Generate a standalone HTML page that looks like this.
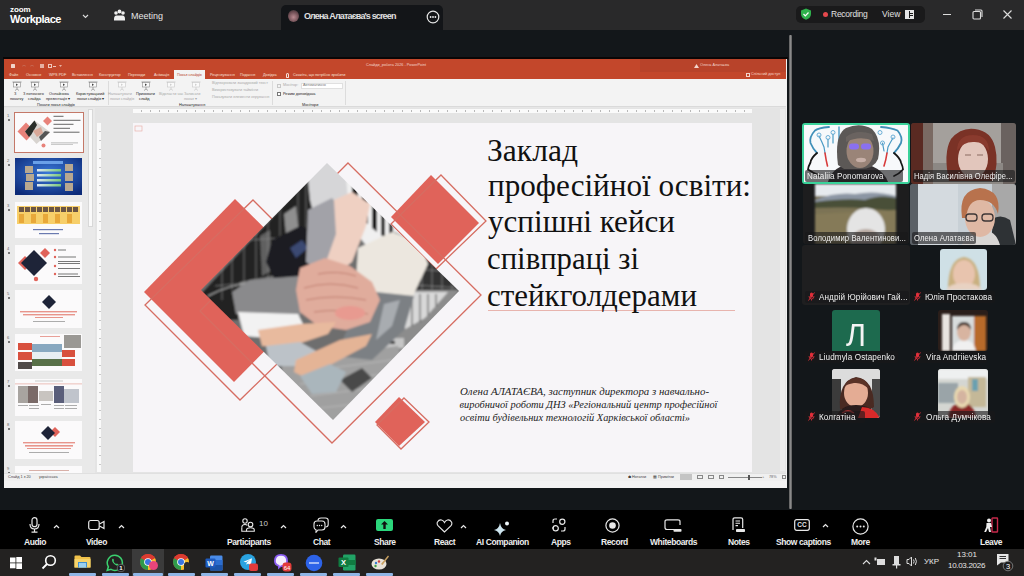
<!DOCTYPE html>
<html><head><meta charset="utf-8">
<style>
*{margin:0;padding:0;box-sizing:border-box}
html,body{width:1024px;height:576px;overflow:hidden;background:#131518;font-family:"Liberation Sans",sans-serif}
.a{position:absolute}
#top{left:0;top:0;width:1024px;height:30px;background:#29292a}
#main{left:0;top:30px;width:1024px;height:480px;background:#13171a}
#tb{left:0;top:510px;width:1024px;height:39px;background:#000}
#task{left:0;top:549px;width:1024px;height:27px;background:#232221}
#ppt{left:4px;top:59px;width:783px;height:429px;background:#e6e6e6;overflow:hidden}
#sep{left:789px;top:35px;width:3px;height:474px;background:linear-gradient(90deg,#5a5a5a,#8a8a8a,#5a5a5a);border-radius:1px}
.t{color:#fff;white-space:nowrap}
.rt{font-size:3.8px;color:#222;line-height:5px}
.rt.g{color:#aaa}
.bl{font-size:8.5px;color:#eee;font-weight:bold;letter-spacing:-0.4px}
.lab{height:12px;background:rgba(24,24,26,0.62);border-radius:2px}
.pn{font-size:8.5px;color:#f0f0f0;letter-spacing:0.1px;transform-origin:left center}
.rib svg{display:block;position:absolute;left:0;top:0}
.rib .ic{position:absolute;left:0;top:0;width:8px;height:9px;border:1px solid #7b7b7b;border-radius:1px;background:#fff}
.rib.g .ic{border-color:#c3c3c3}
</style></head><body>
<div id="top" class="a">
  <div class="a t" style="left:10px;top:5px;font-size:8px;font-weight:bold;letter-spacing:-0.1px">zoom</div>
  <div class="a t" style="left:10px;top:13px;font-size:11px;font-weight:bold;letter-spacing:-0.5px">Workplace</div>
  <svg class="a" style="left:82px;top:13px" width="7" height="6" viewBox="0 0 7 6"><path d="M1 2 L3.5 4.5 L6 2" stroke="#ddd" stroke-width="1.1" fill="none"/></svg>
  <svg class="a" style="left:113px;top:9px" width="13" height="13" viewBox="0 0 13 13"><circle cx="3" cy="4" r="1.8" fill="#eee"/><circle cx="6.5" cy="2.5" r="1.9" fill="#eee"/><circle cx="10" cy="4" r="1.8" fill="#eee"/><path d="M1 10 Q1 6.5 3.5 6.5 L9.5 6.5 Q12 6.5 12 10 L12 11.5 L1 11.5Z" fill="#eee"/></svg>
  <div class="a t" style="left:131px;top:11px;font-size:9px;color:#e6e6e6">Meeting</div>
  <div class="a" style="left:281px;top:5px;width:162px;height:25px;background:#131518;border-radius:5px 5px 0 0"></div>
  <div class="a" style="left:288px;top:10px;width:11px;height:12px;border-radius:50%;background:radial-gradient(circle at 50% 60%,#b98a90,#6a4a50 60%,#2a2a2a)"></div>
  <div class="a t" style="left:304px;top:11px;font-size:9px;color:#e0e0e0;font-weight:bold;letter-spacing:-0.85px">Олена Алатаєва's screen</div>
  <svg class="a" style="left:426px;top:10px" width="14" height="14" viewBox="0 0 14 14"><circle cx="7" cy="7" r="5.8" stroke="#e6e6e6" stroke-width="1.2" fill="none"/><circle cx="4.6" cy="7" r="0.9" fill="#eee"/><circle cx="7" cy="7" r="0.9" fill="#eee"/><circle cx="9.4" cy="7" r="0.9" fill="#eee"/></svg>
  <div class="a" style="left:796px;top:6px;width:129px;height:17px;background:#1a1a1b;border-radius:5px"></div>
  <svg class="a" style="left:800px;top:8px" width="12" height="12" viewBox="0 0 12 12"><path d="M6 0.5 L11 2.5 L11 6 Q11 10 6 11.8 Q1 10 1 6 L1 2.5Z" fill="#2fb24c"/><path d="M3.5 6 L5.3 7.8 L8.5 4.5" stroke="#fff" stroke-width="1.2" fill="none"/></svg>
  <div class="a" style="left:823px;top:12px;width:5px;height:5px;border-radius:50%;background:#e5484d"></div>
  <div class="a t" style="left:831px;top:9px;font-size:8.5px;color:#e0e0e0;letter-spacing:-0.25px">Recording</div>
  <div class="a t" style="left:882px;top:9px;font-size:8.5px;color:#e0e0e0">View</div>
  <svg class="a" style="left:905px;top:10px" width="9" height="9" viewBox="0 0 9 9"><rect x="0" y="0" width="9" height="9" fill="#e6e6e6"/><rect x="4" y="1" width="1" height="7" fill="#1a1a1b"/><rect x="5" y="3" width="3" height="1" fill="#1a1a1b"/><rect x="5" y="5" width="3" height="1" fill="#1a1a1b"/></svg>
  <div class="a" style="left:943px;top:14px;width:8px;height:1px;background:#ddd"></div>
  <svg class="a" style="left:972px;top:9px" width="11" height="11" viewBox="0 0 11 11"><rect x="1" y="2.5" width="7.5" height="7.5" rx="1" stroke="#ddd" stroke-width="1.1" fill="none"/><path d="M3 1 L9 1 Q10 1 10 2 L10 8" stroke="#ddd" stroke-width="1.1" fill="none"/></svg>
  <svg class="a" style="left:1003px;top:10px" width="9" height="9" viewBox="0 0 9 9"><path d="M0.5 0.5 L8.5 8.5 M8.5 0.5 L0.5 8.5" stroke="#ddd" stroke-width="1.1"/></svg>
</div>
<div id="main" class="a"></div>
<div class="a" style="left:3px;top:57px;width:785px;height:2px;background:#0a0606"></div>
<div id="ppt" class="a">
  <!-- title bar + tabs (abs coords via offset: left-4, top-59) -->
  <div class="a" style="left:0;top:0;width:783px;height:20px;background:#c3472b"></div>
  <div class="a" style="left:636px;top:0;width:147px;height:13px;background:#b8432a"></div>
  
  <div class="a" style="left:7px;top:5px;width:4px;height:4px;background:#f2d4ca;border-radius:0.5px"></div>
  <div class="a" style="left:18px;top:6px;width:4px;height:2px;border-top:1px solid #c86a55;border-radius:2px 2px 0 0"></div>
  <div class="a" style="left:26px;top:6px;width:4px;height:2px;border-top:1px solid #c86a55;border-radius:2px 2px 0 0"></div>
  <div class="a" style="left:36px;top:4.5px;width:4px;height:4.5px;background:#e6b0a2"></div>
  <div class="a" style="left:44px;top:5px;width:4px;height:4px;border:0.8px solid #f0c8bd"></div>
  <div class="a" style="left:49px;top:6.5px;width:3px;height:1.5px;background:#f0c8bd"></div>
  <div class="a" style="left:55px;top:6px;width:3px;height:2px;background:#e8b0a0;clip-path:polygon(0 0,100% 0,50% 100%)"></div>
  <div class="a t" style="left:362px;top:4px;font-size:3.8px;color:#f3d5cc">Слайди_робота 2026  -  PowerPoint</div>
  <div class="a" style="left:690px;top:5px;width:5px;height:4px;background:#f3d5cc;clip-path:polygon(50% 0,100% 100%,0 100%)"></div>
  <div class="a t" style="left:696px;top:4px;font-size:3.8px;color:#f3d5cc">Олена Алатаєва</div>
  <div class="a" style="left:742px;top:14px;width:4px;height:4px;border:1px solid #f3d5cc"></div>
  <div class="a t" style="left:747px;top:13px;font-size:3.8px;color:#f3d5cc">Спільний доступ</div>
  <div class="a t tabs" style="left:5px;top:14px;font-size:3.8px;color:#f6e0d9">Файл</div>
  <div class="a t" style="left:22px;top:14px;font-size:3.8px;color:#f6e0d9">Основне</div>
  <div class="a t" style="left:45px;top:14px;font-size:3.8px;color:#f6e0d9">WPS PDF</div>
  <div class="a t" style="left:68px;top:14px;font-size:3.8px;color:#f6e0d9">Вставлення</div>
  <div class="a t" style="left:95px;top:14px;font-size:3.8px;color:#f6e0d9">Конструктор</div>
  <div class="a t" style="left:124px;top:14px;font-size:3.8px;color:#f6e0d9">Переходи</div>
  <div class="a t" style="left:150px;top:14px;font-size:3.8px;color:#f6e0d9">Анімація</div>
  <div class="a" style="left:170px;top:11px;width:31px;height:9px;background:#f3f3f3"></div>
  <div class="a t" style="left:173px;top:14px;font-size:3.8px;color:#b8432a">Показ слайдів</div>
  <div class="a t" style="left:206px;top:14px;font-size:3.8px;color:#f6e0d9">Рецензування</div>
  <div class="a t" style="left:236px;top:14px;font-size:3.8px;color:#f6e0d9">Подання</div>
  <div class="a t" style="left:259px;top:14px;font-size:3.8px;color:#f6e0d9">Довідка</div>
  <div class="a" style="left:282px;top:14px;width:3px;height:5px;border:0.8px solid #f6e0d9;border-radius:2px 2px 1px 1px"></div>
  <div class="a t" style="left:289px;top:14px;font-size:3.8px;color:#f6e0d9">Скажіть, що потрібно зробити</div>
  <!-- ribbon -->
  <div class="a" style="left:0;top:20px;width:783px;height:28px;background:#f3f3f3;border-bottom:1px solid #dadada"></div>
  <div class="a" style="left:104px;top:22px;width:1px;height:24px;background:#dcdcdc"></div>
  <div class="a" style="left:268px;top:22px;width:1px;height:24px;background:#dcdcdc"></div>
  <div class="a" style="left:341px;top:22px;width:1px;height:24px;background:#dcdcdc"></div>
  <div class="a rib" style="left:8px;top:22px;width:10px;height:10px"><svg width="10" height="10" viewBox="0 0 10 10"><path d="M0.5 1 L9.5 1" stroke="#8a8a8a" stroke-width="0.8"/><rect x="1.5" y="1.5" width="7" height="4.5" fill="#fafafa" stroke="#8a8a8a" stroke-width="0.6"/><path d="M5 6 L5 8 M3 9.5 L5 8 L7 9.5" stroke="#8a8a8a" stroke-width="0.7" fill="none"/><path d="M4 2.5 L6 3.7 L4 4.9Z" fill="#444"/></svg></div>
  <div class="a rib" style="left:26px;top:22px;width:10px;height:10px"><svg width="10" height="10" viewBox="0 0 10 10"><path d="M0.5 1 L9.5 1" stroke="#8a8a8a" stroke-width="0.8"/><rect x="1.5" y="1.5" width="7" height="4.5" fill="#fafafa" stroke="#8a8a8a" stroke-width="0.6"/><path d="M5 6 L5 8 M3 9.5 L5 8 L7 9.5" stroke="#8a8a8a" stroke-width="0.7" fill="none"/><path d="M4 2.5 L6 3.7 L4 4.9Z" fill="#444"/></svg></div>
  <div class="a rib" style="left:55px;top:22px;width:10px;height:10px"><svg width="10" height="10" viewBox="0 0 10 10"><path d="M0.5 1 L9.5 1" stroke="#8a8a8a" stroke-width="0.8"/><rect x="1.5" y="1.5" width="7" height="4.5" fill="#fafafa" stroke="#8a8a8a" stroke-width="0.6"/><path d="M5 6 L5 8 M3 9.5 L5 8 L7 9.5" stroke="#8a8a8a" stroke-width="0.7" fill="none"/><path d="M4 2.5 L6 3.7 L4 4.9Z" fill="#444"/></svg></div>
  <div class="a rib" style="left:84px;top:22px;width:10px;height:10px"><svg width="10" height="10" viewBox="0 0 10 10"><path d="M0.5 1 L9.5 1" stroke="#8a8a8a" stroke-width="0.8"/><rect x="1.5" y="1.5" width="7" height="4.5" fill="#fafafa" stroke="#8a8a8a" stroke-width="0.6"/><path d="M5 6 L5 8 M3 9.5 L5 8 L7 9.5" stroke="#8a8a8a" stroke-width="0.7" fill="none"/><path d="M4 2.5 L6 3.7 L4 4.9Z" fill="#444"/></svg></div>
  <div class="a t rt" style="left:10px;top:33px">З</div>
  <div class="a t rt" style="left:6px;top:38px">початку</div>
  <div class="a t rt" style="left:19px;top:33px">З поточного</div>
  <div class="a t rt" style="left:24px;top:38px">слайда</div>
  <div class="a t rt" style="left:45px;top:33px">Онлайнова</div>
  <div class="a t rt" style="left:42px;top:38px">презентація ▾</div>
  <div class="a t rt" style="left:72px;top:33px">Користувацький</div>
  <div class="a t rt" style="left:73px;top:38px">показ слайдів ▾</div>
  <div class="a t rt" style="left:33px;top:43.5px">Почати показ слайдів</div>
  <div class="a rib g" style="left:113px;top:22px;width:10px;height:10px"><svg width="10" height="10" viewBox="0 0 10 10"><path d="M0.5 1 L9.5 1" stroke="#c8c8c8" stroke-width="0.8"/><rect x="1.5" y="1.5" width="7" height="4.5" fill="#fafafa" stroke="#c8c8c8" stroke-width="0.6"/><path d="M5 6 L5 8 M3 9.5 L5 8 L7 9.5" stroke="#c8c8c8" stroke-width="0.7" fill="none"/><path d="M4 2.5 L6 3.7 L4 4.9Z" fill="#d0d0d0"/></svg></div>
  <div class="a rib" style="left:137px;top:22px;width:10px;height:10px"><svg width="10" height="10" viewBox="0 0 10 10"><path d="M0.5 1 L9.5 1" stroke="#8a8a8a" stroke-width="0.8"/><rect x="1.5" y="1.5" width="7" height="4.5" fill="#fafafa" stroke="#8a8a8a" stroke-width="0.6"/><path d="M5 6 L5 8 M3 9.5 L5 8 L7 9.5" stroke="#8a8a8a" stroke-width="0.7" fill="none"/><path d="M4 2.5 L6 3.7 L4 4.9Z" fill="#444"/></svg></div>
  <div class="a rib g" style="left:162px;top:22px;width:10px;height:10px"><svg width="10" height="10" viewBox="0 0 10 10"><path d="M0.5 1 L9.5 1" stroke="#c8c8c8" stroke-width="0.8"/><rect x="1.5" y="1.5" width="7" height="4.5" fill="#fafafa" stroke="#c8c8c8" stroke-width="0.6"/><path d="M5 6 L5 8 M3 9.5 L5 8 L7 9.5" stroke="#c8c8c8" stroke-width="0.7" fill="none"/><path d="M4 2.5 L6 3.7 L4 4.9Z" fill="#d0d0d0"/></svg></div>
  <div class="a rib g" style="left:187px;top:22px;width:10px;height:10px"><svg width="10" height="10" viewBox="0 0 10 10"><path d="M0.5 1 L9.5 1" stroke="#c8c8c8" stroke-width="0.8"/><rect x="1.5" y="1.5" width="7" height="4.5" fill="#fafafa" stroke="#c8c8c8" stroke-width="0.6"/><path d="M5 6 L5 8 M3 9.5 L5 8 L7 9.5" stroke="#c8c8c8" stroke-width="0.7" fill="none"/><path d="M4 2.5 L6 3.7 L4 4.9Z" fill="#d0d0d0"/></svg></div>
  <div class="a t rt g" style="left:104px;top:33px">Налаштувати</div>
  <div class="a t rt g" style="left:106px;top:38px">показ слайдів</div>
  <div class="a t rt" style="left:132px;top:33px">Приховати</div>
  <div class="a t rt" style="left:135px;top:38px">слайд</div>
  <div class="a t rt g" style="left:155px;top:33px">Відкласти час</div>
  <div class="a t rt g" style="left:180px;top:33px">Записати</div>
  <div class="a t rt g" style="left:180px;top:38px">показ ▾</div>
  <div class="a t rt g" style="left:208px;top:22px">Відтворювати закадровий текст</div>
  <div class="a t rt g" style="left:208px;top:29px">Використовувати таймінги</div>
  <div class="a t rt g" style="left:208px;top:36px">Показувати елементи керування</div>
  <div class="a t rt" style="left:175px;top:43.5px">Налаштування</div>
  <div class="a" style="left:273px;top:25px;width:4px;height:4px;border:1px solid #c8c8c8"></div>
  <div class="a t rt g" style="left:279px;top:24px">Монітор:</div>
  <div class="a" style="left:297px;top:24px;width:42px;height:6px;background:#fff;border:1px solid #e0e0e0"></div>
  <div class="a t rt" style="left:299px;top:24px;color:#777">Автоматично</div>
  <div class="a" style="left:273px;top:33px;width:4px;height:4px;border:1px solid #777;background:#fff"></div>
  <div class="a t rt" style="left:279px;top:33px">Режим доповідача</div>
  <div class="a t rt" style="left:298px;top:43.5px">Монітори</div>
  <!-- workspace -->
  <div class="a" style="left:0;top:49px;width:783px;height:365px;background:#e4e4e4"></div><div class="a" style="left:0;top:49px;width:91px;height:365px;background:#e9e9e9"></div>
  <div class="a" style="left:84px;top:50px;width:5px;height:118px;background:#fafafa;border:1px solid #d8d8d8"></div>
<div class="a" style="left:9.5px;top:52.5px;width:70px;height:41px;border:1.5px solid #c47868;background:#fbfafb"></div>
<svg class="a" style="left:11px;top:54px;filter:blur(0.35px)" width="67" height="38" viewBox="0 0 67 38">
<g filter="url(#bl2)">
<polygon points="2.5,18.5 11,9.5 20,18.5 11.5,27.5" fill="#e8827a"/>
<polygon points="28,8 32.5,3.5 37,8 32.5,12.5" fill="#e8827a"/>
<polygon points="10,18.5 19.5,7.5 35,19 21.5,31" fill="#d8d4d0"/>
<polygon points="10,18.5 19.5,7.5 22,12 16,22 14,24" fill="#2a2e2a"/>
<polygon points="24,24 30,18 35,19 26,28" fill="#555"/>
<polygon points="18,18 26,14 28,20 22,24" fill="#d8a898"/>
<circle cx="28.5" cy="32.5" r="2" fill="#e8827a"/>
</g>
<g fill="#666"><rect x="38.5" y="2.8" width="10" height="1"/><rect x="38.5" y="6.8" width="27" height="1"/><rect x="38.5" y="10.8" width="20" height="1"/><rect x="38.5" y="14.8" width="16.5" height="1"/><rect x="38.5" y="18.7" width="26" height="1"/></g>
<g fill="#aaa"><rect x="36" y="29.5" width="27" height="0.8"/><rect x="36" y="31.3" width="22" height="0.6"/></g>
</svg>
<svg class="a" style="left:11px;top:98.5px;filter:blur(0.35px)" width="67" height="37" viewBox="0 0 67 37">
<defs><radialGradient id="bg2" cx="50%" cy="40%" r="70%"><stop offset="0" stop-color="#3a78d8"/><stop offset="1" stop-color="#0c2a78"/></radialGradient>
<linearGradient id="bar2" x1="0" x2="1"><stop offset="0" stop-color="#dfe8f4"/><stop offset="1" stop-color="#7ac87a"/></linearGradient></defs>
<rect width="67" height="37" fill="url(#bg2)"/>
<rect x="18" y="3" width="30" height="3" fill="#6aa0e8"/>
<g fill="url(#bar2)"><rect x="22" y="11" width="24" height="2.5"/><rect x="22" y="16" width="24" height="2.5"/><rect x="22" y="21" width="24" height="2.5"/><rect x="22" y="26" width="24" height="2.5"/></g>
<g fill="#b8a890"><rect x="10" y="8" width="8" height="7"/><rect x="11" y="16" width="8" height="7"/><rect x="10" y="24" width="8" height="8"/><rect x="50" y="6" width="8" height="7"/><rect x="50" y="15" width="8" height="8"/><rect x="50" y="25" width="8" height="8"/></g>
</svg>
<svg class="a" style="left:11px;top:143px;filter:blur(0.35px)" width="67" height="36" viewBox="0 0 67 36">
<rect width="67" height="36" fill="#fbfafb"/>
<rect x="2" y="4" width="63" height="18" fill="#f7cf6a"/>
<g fill="#6a5444"><rect x="4" y="5" width="5" height="5"/><rect x="10" y="5" width="5" height="5"/><rect x="16" y="5" width="5" height="5"/><rect x="22" y="5" width="5" height="5"/><rect x="28" y="5" width="5" height="5"/><rect x="34" y="5" width="5" height="5"/><rect x="40" y="5" width="5" height="5"/><rect x="46" y="5" width="5" height="5"/><rect x="52" y="5" width="5" height="5"/><rect x="58" y="5" width="5" height="5"/></g>
<g fill="#e8a83a"><rect x="4" y="12" width="5" height="9"/><rect x="16" y="12" width="5" height="9"/><rect x="28" y="12" width="5" height="9"/><rect x="40" y="12" width="5" height="9"/><rect x="52" y="12" width="5" height="9"/></g>
<rect x="18" y="27" width="30" height="1.2" fill="#6a7ab0"/><rect x="24" y="31" width="20" height="1.2" fill="#6a7ab0"/>
</svg>
<svg class="a" style="left:11px;top:186px;filter:blur(0.35px)" width="67" height="39" viewBox="0 0 67 39">
<rect width="67" height="39" fill="#fbfafb"/>
<polygon points="3,18 10,11 17,18 10,25" fill="#e0635a"/><polygon points="25,8 30,3 35,8 30,13" fill="#e0635a"/>
<polygon points="6,18 19,5 32,18 19,31" fill="#1e2438"/>
<circle cx="21" cy="34" r="2.2" fill="#e0635a"/>
<g fill="#e0635a"><circle cx="40" cy="5" r="1.2"/><circle cx="40" cy="12" r="1.2"/><circle cx="40" cy="21" r="1.2"/><circle cx="40" cy="29" r="1.2"/></g>
<g fill="#777"><rect x="43" y="4.5" width="8" height="1"/><rect x="43" y="11.5" width="18" height="1"/><rect x="43" y="16" width="22" height="1"/><rect x="43" y="18" width="22" height="1"/><rect x="43" y="23" width="22" height="1"/><rect x="43" y="28.5" width="20" height="1"/><rect x="43" y="31" width="22" height="1"/></g>
</svg>
<svg class="a" style="left:11px;top:231px;filter:blur(0.35px)" width="67" height="38" viewBox="0 0 67 38">
<rect width="67" height="38" fill="#fbfafb"/>
<polygon points="30,12 35,7 40,12 35,17" fill="#e0635a"/>
<polygon points="27,12 34,5 41,12 34,19" fill="#1e2438"/>
<rect x="5" y="21" width="57" height="1.4" fill="#e8958c"/><rect x="8" y="24" width="52" height="1.4" fill="#e8958c"/><rect x="20" y="27" width="28" height="1" fill="#e8958c"/>
<rect x="18" y="31" width="32" height="0.8" fill="#999"/>
</svg>
<svg class="a" style="left:11px;top:275px;filter:blur(0.35px)" width="67" height="37" viewBox="0 0 67 37">
<rect width="67" height="37" fill="#fbfafb"/>
<rect x="25" y="2" width="20" height="1" fill="#e8a098"/>
<g fill="#d8503e"><rect x="3" y="9" width="14" height="7"/><rect x="3" y="18" width="14" height="8"/><rect x="46" y="16" width="14" height="7"/><rect x="46" y="25" width="14" height="7"/></g>
<rect x="17" y="10" width="30" height="22" fill="#88a8c0"/><rect x="17" y="18" width="30" height="7" fill="#e8eef2"/><rect x="17" y="25" width="30" height="7" fill="#587048"/>
<rect x="49" y="1" width="17" height="13" fill="#9a9894"/>
<rect x="3" y="28" width="14" height="7" fill="#504a48"/>
</svg>
<svg class="a" style="left:11px;top:319.5px;filter:blur(0.35px)" width="67" height="37" viewBox="0 0 67 37">
<rect width="67" height="37" fill="#fbfafb"/>
<rect x="0" y="4.5" width="67" height="0.8" fill="#e8b0a8"/><rect x="20" y="1.5" width="28" height="1" fill="#ccc"/>
<rect x="3" y="7" width="10" height="17" fill="#a8a4a0"/><rect x="13" y="7" width="10" height="17" fill="#7a6a68"/>
<rect x="24" y="12" width="14" height="10" fill="#c8c4c0"/>
<rect x="39" y="7" width="10" height="17" fill="#5a5e7a"/><rect x="49" y="10" width="15" height="14" fill="#c0c4cc"/>
<g fill="#999"><rect x="3" y="26" width="10" height="0.8"/><rect x="14" y="26" width="10" height="0.8"/><rect x="26" y="25" width="10" height="0.8"/><rect x="39" y="26" width="10" height="0.8"/><rect x="50" y="26" width="12" height="0.8"/><rect x="14" y="29" width="10" height="0.8"/><rect x="39" y="29" width="10" height="0.8"/><rect x="50" y="29" width="12" height="0.8"/></g>
</svg>
<svg class="a" style="left:11px;top:362px;filter:blur(0.35px)" width="67" height="38" viewBox="0 0 67 38">
<rect width="67" height="38" fill="#fbfafb"/>
<polygon points="35,11 40,6 45,11 40,16" fill="#e0635a"/>
<polygon points="26,12 33,5 40,12 33,19" fill="#1e2438"/>
<rect x="8" y="21" width="52" height="1.4" fill="#e8958c"/><rect x="10" y="24" width="48" height="1.6" fill="#e8958c"/><rect x="12" y="27" width="44" height="1" fill="#e8958c"/>
<rect x="14" y="31" width="40" height="0.8" fill="#999"/>
</svg>
<div class="a" style="left:11px;top:406.5px;width:67px;height:7px;background:#fbfafb"><div class="a" style="left:14px;top:4px;width:40px;height:1px;background:#d8b0a8"></div></div>
<div class="a t" style="left:3px;top:54px;font-size:4px;color:#666">1</div>
<div class="a" style="left:4px;top:60px;width:2px;height:2px;background:#777"></div>
<div class="a t" style="left:3px;top:99px;font-size:4px;color:#666">2</div>
<div class="a" style="left:4px;top:105px;width:2px;height:2px;background:#777"></div>
<div class="a t" style="left:3px;top:144px;font-size:4px;color:#666">3</div>
<div class="a" style="left:4px;top:150px;width:2px;height:2px;background:#777"></div>
<div class="a t" style="left:3px;top:187px;font-size:4px;color:#666">4</div>
<div class="a" style="left:4px;top:193px;width:2px;height:2px;background:#777"></div>
<div class="a t" style="left:3px;top:232px;font-size:4px;color:#666">5</div>
<div class="a" style="left:4px;top:238px;width:2px;height:2px;background:#777"></div>
<div class="a t" style="left:3px;top:276px;font-size:4px;color:#666">6</div>
<div class="a" style="left:4px;top:282px;width:2px;height:2px;background:#777"></div>
<div class="a t" style="left:3px;top:320px;font-size:4px;color:#666">7</div>
<div class="a" style="left:4px;top:326px;width:2px;height:2px;background:#777"></div>
<div class="a t" style="left:3px;top:363px;font-size:4px;color:#666">8</div>
<div class="a" style="left:4px;top:369px;width:2px;height:2px;background:#777"></div>
<div class="a t" style="left:3px;top:407px;font-size:4px;color:#666">9</div>
<div class="a" style="left:4px;top:413px;width:2px;height:2px;background:#777"></div>

  <div class="a" style="left:93px;top:64px;width:4px;height:349px;background:#fafafa"></div><div class="a" style="left:95px;top:64px;width:2px;height:349px;background:repeating-linear-gradient(180deg,transparent 0,transparent 8px,#c8c8c8 8px,#c8c8c8 9px)"></div>
  <div class="a" style="left:129px;top:49.5px;width:619px;height:4.5px;background:#fafafa"></div><div class="a" style="left:129px;top:51px;width:619px;height:2px;background:repeating-linear-gradient(90deg,transparent 0,transparent 8px,#b8b8b8 8px,#b8b8b8 9px)"></div>
  <svg class="a" style="left:129px;top:64px" width="619" height="349" viewBox="133 123 619 349">
    <defs>
      <clipPath id="pc"><polygon points="201,290 327,163 459,291 333,420"/></clipPath>
      <filter id="bl" x="-5%" y="-5%" width="110%" height="110%"><feGaussianBlur stdDeviation="0.9"/></filter>
      <filter id="bl4"><feGaussianBlur stdDeviation="0.55"/></filter><filter id="bl3"><feGaussianBlur stdDeviation="1.3"/></filter><filter id="bl2"><feGaussianBlur stdDeviation="0.6"/></filter>
    </defs>
    <rect x="133" y="123" width="619" height="349" fill="#f7f5f8"/>
    <rect x="135" y="126" width="7" height="5" fill="none" stroke="#e8a8a0" stroke-width="0.6"/>
    <polygon points="144,292 235,199 326,289 234,382" fill="#e0635a"/>
    <polygon points="391,217 431,175 479,223 438,264" fill="#e0635a"/>
    <polygon points="375,422 399,397 425,422 399,446" fill="#e0635a"/>
    <g fill="none" stroke="#d66d62" stroke-width="1.3">
      <polygon points="348,163 481,295 332,443 200,311"/>
      <polygon points="253,200 348,295 240,400 145,305"/>
      <polygon points="441,175 486,221 436,269 391,224"/>
      <polygon points="404,398 429,422 401,449 377,425"/>
    </g>
    <g clip-path="url(#pc)">
      <g filter="url(#bl)">
      <rect x="195" y="160" width="270" height="265" fill="#6e6e6e"/>
      <!-- left dark buildings -->
      <polygon points="195,300 312,175 320,232 292,272 240,282 238,320 215,320" fill="#242424"/>
      <g stroke="#c8c8c8" stroke-width="0.6" opacity="0.7">
        <line x1="222" y1="262" x2="222" y2="300"/><line x1="232" y1="252" x2="232" y2="290"/><line x1="244" y1="238" x2="244" y2="285"/><line x1="256" y1="225" x2="256" y2="282"/><line x1="268" y1="212" x2="268" y2="280"/><line x1="280" y1="200" x2="280" y2="262"/><line x1="298" y1="186" x2="298" y2="250"/><line x1="306" y1="180" x2="306" y2="240"/>
        <line x1="215" y1="286" x2="300" y2="278"/><line x1="250" y1="240" x2="310" y2="236"/>
      </g>
      <polygon points="284,214 296,206 300,248 288,256" fill="#bdbdbd" opacity="0.7"/>
      <polygon points="260,236 270,230 272,270 262,276" fill="#8a8a8a" opacity="0.6"/>
      <path d="M208 296 Q240 278 290 282" stroke="#b0b0b0" stroke-width="1.2" fill="none"/>
      <!-- top sky band -->
      <polygon points="306,160 350,160 348,214 318,232 310,200" fill="#d6d6d8"/>
      <!-- upper right white building w black stripes -->
      <polygon points="346,176 400,178 404,242 370,250 350,226" fill="#f0f0f0"/>
      <g fill="#1a1a1a"><polygon points="352,182 358,184 358,216 352,212"/><polygon points="362,188 368,191 368,224 362,220"/><polygon points="372,196 377,199 377,232 372,228"/><polygon points="381,204 385,207 385,238 381,235"/><polygon points="389,212 393,215 393,244 389,241"/></g>
      <!-- right dark buildings -->
      <polygon points="394,232 465,262 465,310 420,318 390,290" fill="#323232"/>
      <g stroke="#d0d0d0" stroke-width="0.6" opacity="0.75"><line x1="402" y1="238" x2="402" y2="318"/><line x1="412" y1="242" x2="412" y2="318"/><line x1="422" y1="248" x2="422" y2="318"/><line x1="432" y1="254" x2="432" y2="318"/><line x1="442" y1="262" x2="442" y2="312"/><line x1="452" y1="270" x2="452" y2="305"/><line x1="396" y1="268" x2="462" y2="272"/><line x1="396" y1="284" x2="462" y2="288"/></g>
      <!-- lower right city -->
      <polygon points="372,290 460,290 430,332 392,364 362,348" fill="#8c8c8c"/>
      <polygon points="398,292 448,292 425,318 400,332" fill="#d8d8d8"/>
      <g stroke="#222" stroke-width="0.9" opacity="0.85"><line x1="404" y1="294" x2="404" y2="330"/><line x1="412" y1="294" x2="412" y2="326"/><line x1="420" y1="294" x2="420" y2="322"/><line x1="428" y1="294" x2="428" y2="315"/><line x1="436" y1="294" x2="436" y2="306"/></g>
      <g stroke="#eaeaea" stroke-width="0.6" opacity="0.8"><line x1="380" y1="300" x2="380" y2="352"/><line x1="390" y1="300" x2="390" y2="346"/><line x1="374" y1="316" x2="398" y2="314"/></g>
      <rect x="362" y="338" width="42" height="10" fill="#c6c6c6"/>
      <g fill="#333"><rect x="368" y="341" width="5" height="3"/><rect x="378" y="340" width="6" height="4"/><rect x="390" y="341" width="5" height="3"/></g>
      <!-- street -->
      <polygon points="282,362 398,346 404,380 333,425 282,392" fill="#a0a0a0"/>
      <g stroke="#c0c0c0" stroke-width="0.7"><line x1="300" y1="372" x2="392" y2="360"/><line x1="300" y1="384" x2="384" y2="374"/><line x1="310" y1="396" x2="372" y2="388"/><line x1="320" y1="408" x2="356" y2="404"/></g>
      <polygon points="340,380 362,368 372,378 352,392" fill="#4a4a4a"/>
      <!-- dark suit -->
      <polygon points="272,240 300,226 334,236 338,262 318,284 276,282 266,262" fill="#1c1d24"/>
      <polygon points="290,248 302,240 308,248 296,258" fill="#3a4872"/>
      <!-- light gray arm top -->
      <polygon points="308,210 332,198 342,210 338,252 324,274 306,262" fill="#a2a2a8"/>
      <!-- skin arm from top -->
      <polygon points="334,200 352,192 370,204 366,226 352,262 336,274 326,262 336,234" fill="#efd0c2"/>
      <!-- cream sleeve -->
      <polygon points="358,248 392,232 420,242 428,264 412,298 380,294 356,282" fill="#ece7df"/>
      <!-- gray sleeve left -->
      <polygon points="232,292 250,280 300,276 308,298 300,316 236,314" fill="#8a8a8c"/>
      <!-- white shirt -->
      <polygon points="238,312 298,314 306,330 268,338 244,336" fill="#f2f2f2"/>
      <!-- gray right sleeve -->
      <polygon points="376,292 414,296 404,330 372,360 336,356 352,318" fill="#7c8084"/>
      <polygon points="384,304 400,300 392,326 376,340" fill="#a8acb0"/>
      <!-- hands stack -->
      <polygon points="300,268 325,258 350,266 372,282 380,300 370,322 346,330 318,326 300,312 296,290" fill="#e0ac9c"/>
      <g stroke="#b46e60" stroke-width="0.9" opacity="0.85" fill="none"><path d="M304 288 Q330 280 358 288"/><path d="M306 300 Q335 294 366 300"/><path d="M314 312 Q340 308 368 314"/><path d="M318 274 Q338 270 356 276"/></g>
      <ellipse cx="350" cy="313" rx="15" ry="7" fill="#e89a90"/>
      <!-- lower arm 1 -->
      <polygon points="258,330 300,324 336,322 328,334 292,346 262,346" fill="#e8ba9e"/>
      <!-- light shirt between -->
      <polygon points="266,346 300,342 318,352 302,366 270,366" fill="#bcc2c8"/>
      <!-- lower arm 2 -->
      <polygon points="296,360 340,340 372,334 366,346 332,364 306,378 294,372" fill="#e4b496"/>
      <!-- bluish sleeve bottom -->
      <polygon points="300,376 330,364 346,372 336,392 312,394" fill="#aab6bc"/>
      </g>
    </g>
    <line x1="488" y1="310.5" x2="735" y2="310.5" stroke="#e3a39b" stroke-width="0.8"/>
    <g font-family="Liberation Serif" fill="#111" font-size="32">
      <text x="487" y="160.5" textLength="91" lengthAdjust="spacingAndGlyphs">Заклад</text>
      <text x="488" y="196" textLength="263" lengthAdjust="spacingAndGlyphs">професійної освіти:</text>
      <text x="488" y="231.6" textLength="187" lengthAdjust="spacingAndGlyphs">успішні кейси</text>
      <text x="487" y="269" textLength="152" lengthAdjust="spacingAndGlyphs">співпраці зі</text>
      <text x="487" y="306" textLength="210" lengthAdjust="spacingAndGlyphs">стейкголдерами</text>
    </g>
    <g font-family="Liberation Serif" font-style="italic" fill="#222" font-size="10.5">
      <text x="460" y="394.7" textLength="249" lengthAdjust="spacingAndGlyphs">Олена АЛАТАЄВА, заступник директора з навчально-</text>
      <text x="459.5" y="408.4" textLength="258" lengthAdjust="spacingAndGlyphs">виробничої роботи ДНЗ «Регіональний центр професійної</text>
      <text x="460" y="421" textLength="230" lengthAdjust="spacingAndGlyphs">освіти будівельних технологій Харківської області»</text>
    </g>
  </svg>
  <div class="a" style="left:776px;top:50px;width:5px;height:362px;background:#ececec"></div>
  <!-- status bar -->
  <div class="a" style="left:0;top:414px;width:783px;height:8px;background:#f0f0f0;border-top:1px solid #e0e0e0"></div>
  <div class="a" style="left:0;top:422px;width:783px;height:7px;background:#f3f3f3"></div>
  <div class="a t rt" style="left:4px;top:416px;color:#444">Слайд 1 з 20</div>
  <div class="a t rt" style="left:35px;top:416px;color:#444">українська</div>
  <div class="a t rt" style="left:624px;top:416px;color:#444">≐ Нотатки</div>
  <div class="a t rt" style="left:649px;top:416px;color:#444">▦ Примітки</div>
  <div class="a" style="left:676px;top:415px;width:12px;height:6px;background:#c4c4c4"></div>
  <div class="a" style="left:693px;top:416px;width:6px;height:4px;border:0.8px solid #888"></div>
  <div class="a" style="left:704px;top:416px;width:6px;height:4px;border:0.8px solid #888"></div>
  <div class="a" style="left:715px;top:416px;width:5px;height:4px;border:0.8px solid #888"></div>
  <div class="a" style="left:724px;top:418px;width:34px;height:0.8px;background:#888"></div>
  <div class="a" style="left:744px;top:416px;width:1.5px;height:5px;background:#555"></div>
  <div class="a t rt" style="left:758px;top:416px;color:#666">+</div>
  <div class="a t rt" style="left:765px;top:416px;color:#666">78%</div>
  <div class="a" style="left:778px;top:416px;width:4px;height:4px;border:0.8px solid #888"></div>
</div>
<div class="a" style="left:786px;top:59px;width:1px;height:429px;background:#f2f2f2"></div>
<div id="sep" class="a"></div>
<div id="panel" class="a" style="left:792px;top:30px;width:232px;height:480px"><div class="a" style="left:10px;top:93px;width:108px;height:61px;background:#f4f6f8;border:2px solid #3ad29a;border-radius:3px;overflow:hidden">
<svg class="a" style="left:0;top:0" width="104" height="57" viewBox="0 0 104 57" filter="url(#bl4)">
<rect width="104" height="57" fill="#f7f9fb"/>
<g fill="none" stroke-width="1.8" stroke-linecap="round">
<path d="M25 2 Q14 3 11 5.5 Q5 12 6.5 18 Q9 24 13 28" stroke="#3f8fb8"/>
<path d="M13 28 Q7 33 6.5 37.5 Q4 42 4 44.5 Q9 48 15.5 50.5" stroke="#161616"/>
<path d="M35 2 L35 20" stroke="#4a9ac4" stroke-width="1.4"/>
<path d="M15 11 Q18 17 20 22 L21 28" stroke="#4a9ac4" stroke-width="1.2"/>
<path d="M24 14 L24 22" stroke="#4a9ac4" stroke-width="1.2"/>
<path d="M29 9 L29 18" stroke="#4a9ac4" stroke-width="1.2"/>
<path d="M21 28 Q22 35 23.5 41" stroke="#d83a3a" stroke-width="1.6"/>
<path d="M77 2 Q88 3 93.5 5.5 Q99 12 97 18 Q94 24 90 28" stroke="#3f8fb8"/>
<path d="M90 28 Q96 33 97 37.5 Q99 42 99 44.5 Q95 49 90 51" stroke="#161616"/>
<path d="M89 13 Q86 18 84 22 L83 28" stroke="#4a9ac4" stroke-width="1.2"/>
<path d="M78.5 18 L80 26" stroke="#4a9ac4" stroke-width="1.2"/>
<path d="M83 28 Q82 35 80 41" stroke="#d83a3a" stroke-width="1.6"/>
</g>
<g fill="none" stroke="#6aaed6" stroke-width="1"><circle cx="15" cy="10" r="2"/><circle cx="24" cy="12.5" r="2"/><circle cx="29" cy="7.5" r="2"/><circle cx="76" cy="7.5" r="2"/><circle cx="89" cy="12" r="2"/><circle cx="78.5" cy="18" r="2"/></g>
<path d="M24 57 Q28 40 52 38 Q78 40 84 57Z" fill="#353234"/>
<path d="M34 40 Q30 10 42 3 Q56 -3 68 4 Q78 14 74 34 Q70 44 56 44 L40 44Z" fill="#5c5856"/>
<ellipse cx="56" cy="26" rx="13.5" ry="17" fill="#9a8478"/>
<path d="M42 12 Q52 4 68 9 L70 16 Q56 10 42 17Z" fill="#6a6460"/>
<rect x="45" y="18.5" width="10" height="6" rx="3" fill="#8a70f0"/><rect x="57" y="18.5" width="10" height="6" rx="3" fill="#8a70f0"/>
<ellipse cx="57" cy="35" rx="5" ry="2.2" fill="#c8b0a8"/>
</svg></div>
<div class="a lab" style="left:13px;top:140px;width:98px"></div><div class="a t pn" style="left:15.2px;top:141px;transform:scaleX(0.949)">Nataliia Ponomarova</div>
<div class="a" style="left:119px;top:93px;width:105px;height:61px;border-radius:3px;overflow:hidden;background:linear-gradient(90deg,#3a2e2a 0%,#6a605a 12%,#9a9692 30%,#aaa6a2 60%,#8a8480 85%,#3a3230 100%)">
<svg class="a" style="left:0;top:0" width="105" height="61" viewBox="0 0 105 61" filter="url(#bl4)">
<rect width="105" height="61" fill="#a4a09c"/>
<rect x="0" y="0" width="12" height="61" fill="#5a2a24"/>
<rect x="12" y="0" width="10" height="61" fill="#7a6a64"/>
<rect x="90" y="0" width="15" height="61" fill="#6a625e"/>
<rect x="22" y="40" width="70" height="21" fill="#8c8884"/>
<path d="M38 58 Q32 30 40 16 Q50 4 64 6 Q80 8 84 24 Q88 40 82 58Z" fill="#7a3026"/>
<ellipse cx="62" cy="36" rx="15" ry="19" fill="#e2c6bc"/>
<path d="M46 28 Q46 12 62 12 Q78 12 78 28 Q72 18 62 19 Q52 19 46 28Z" fill="#8a3a2e"/>
<path d="M54 32 L60 32 M66 32 L72 32" stroke="#8a6a60" stroke-width="1.2"/>
</svg></div>
<div class="a lab" style="left:121px;top:140px;width:102px"></div><div class="a t pn" style="left:121.9px;top:141px;transform:scaleX(0.884)">Надія Василівна Олефіре...</div>
<div class="a" style="left:11px;top:154px;width:106px;height:60px;background:#1d1d1e;border-radius:3px;overflow:hidden">
<svg class="a" style="left:12px;top:0" width="81" height="60" viewBox="0 0 81 60" filter="url(#bl3)">
<rect width="81" height="60" fill="#7c7354"/>
<rect width="81" height="12" fill="#e6eaee"/>
<path d="M0 16 Q20 8 40 10 Q60 6 81 12 L81 20 L0 20Z" fill="#8c96a4"/>
<path d="M0 18 Q30 14 50 16 Q65 10 81 14 L81 28 Q50 22 0 24Z" fill="#4a5038"/>
<path d="M0 30 L81 26 L81 60 L0 60Z" fill="#857a58"/>
<ellipse cx="51" cy="45" rx="19" ry="21" fill="#e4e4e4"/>
<ellipse cx="51" cy="55" rx="14" ry="10" fill="#b8a8a0"/>
</svg></div>
<div class="a lab" style="left:13px;top:202px;width:103px"></div><div class="a t pn" style="left:16.0px;top:203px;transform:scaleX(0.901)">Володимир Валентинови...</div>
<div class="a" style="left:118px;top:154px;width:106px;height:61px;border-radius:3px;overflow:hidden;background:linear-gradient(90deg,#4a4e54 0%,#c4ccd4 12%,#d2d8de 40%,#b0b4b8 70%,#6a6e72 100%)">
<svg class="a" style="left:0;top:0" width="106" height="61" viewBox="0 0 106 61" filter="url(#bl4)">
<rect width="106" height="61" fill="#c8d0d6"/>
<rect x="0" y="0" width="8" height="61" fill="#5a6066"/>
<rect x="8" y="0" width="40" height="61" fill="#d4dadf"/>
<rect x="82" y="0" width="24" height="61" fill="#a8a8a8"/>
<path d="M80 61 L84 34 Q92 30 100 36 L106 61Z" fill="#2e3034"/>
<path d="M52 61 Q56 46 72 46 Q86 46 90 61Z" fill="#d8d6d4"/>
<ellipse cx="70" cy="34" rx="15" ry="19" fill="#dfb8a4"/>
<path d="M52 34 Q48 6 70 4 Q92 6 88 30 Q84 16 70 16 Q58 16 56 34Z" fill="#b8724e"/>
<g fill="none" stroke="#3e3636" stroke-width="1.3"><rect x="56" y="30" width="11" height="7" rx="3"/><rect x="72" y="30" width="11" height="7" rx="3"/></g>
</svg></div>
<div class="a lab" style="left:120px;top:202px;width:64px"></div><div class="a t pn" style="left:122.0px;top:203px;transform:scaleX(0.901)">Олена Алатаєва</div>
<div class="a" style="left:10px;top:215px;width:108px;height:60px;background:#1f1f20;border-radius:3px"></div>
<div class="a lab" style="left:13px;top:261px;width:104px"></div><svg class="a" style="left:16px;top:262px" width="7" height="9" viewBox="0 0 7 9"><rect x="2" y="0.5" width="3" height="5" rx="1.5" fill="#e02f3a"/><path d="M1 4 Q1 7 3.5 7 Q6 7 6 4 M3.5 7 L3.5 8.5" stroke="#e02f3a" stroke-width="0.8" fill="none"/><path d="M0.5 8.5 L6.5 0.5" stroke="#e02f3a" stroke-width="0.9"/></svg><div class="a t pn" style="left:27.3px;top:262px;transform:scaleX(0.957)">Андрій Юрійович Гай...</div>
<div class="a" style="left:148px;top:219px;width:47px;height:41px;border-radius:3px;overflow:hidden;background:#cfe0e6">
<svg class="a" style="left:0;top:0" width="47" height="41" viewBox="0 0 47 41" filter="url(#bl3)">
<path d="M8 41 Q8 10 24 8 Q40 10 40 41Z" fill="#c9b080"/>
<ellipse cx="24" cy="25" rx="11" ry="14" fill="#e8c4ae"/>
<path d="M6 41 Q10 34 24 34 Q38 34 42 41Z" fill="#e8d2c2"/>
</svg></div>
<div class="a lab" style="left:119px;top:261px;width:84px"></div><svg class="a" style="left:122px;top:262px" width="7" height="9" viewBox="0 0 7 9"><rect x="2" y="0.5" width="3" height="5" rx="1.5" fill="#e02f3a"/><path d="M1 4 Q1 7 3.5 7 Q6 7 6 4 M3.5 7 L3.5 8.5" stroke="#e02f3a" stroke-width="0.8" fill="none"/><path d="M0.5 8.5 L6.5 0.5" stroke="#e02f3a" stroke-width="0.9"/></svg><div class="a t pn" style="left:133.0px;top:262px;transform:scaleX(0.964)">Юлія Простакова</div>
<div class="a" style="left:40px;top:280px;width:48px;height:41px;background:#1d6a4e;border-radius:3px 3px 0 0"></div>
<div class="a t" style="left:54px;top:289px;font-size:32px;color:#f4f4f4;line-height:32px;transform:scaleX(0.95);transform-origin:left">Л</div>
<div class="a lab" style="left:13px;top:321px;width:93px"></div><svg class="a" style="left:16px;top:322px" width="7" height="9" viewBox="0 0 7 9"><rect x="2" y="0.5" width="3" height="5" rx="1.5" fill="#e02f3a"/><path d="M1 4 Q1 7 3.5 7 Q6 7 6 4 M3.5 7 L3.5 8.5" stroke="#e02f3a" stroke-width="0.8" fill="none"/><path d="M0.5 8.5 L6.5 0.5" stroke="#e02f3a" stroke-width="0.9"/></svg><div class="a t pn" style="left:27.3px;top:322px;transform:scaleX(0.958)">Liudmyla Ostapenko</div>
<div class="a" style="left:146px;top:280px;width:50px;height:41px;border-radius:3px;overflow:hidden;background:#2a1e1a">
<svg class="a" style="left:0;top:0" width="50" height="41" viewBox="0 0 50 41" filter="url(#bl3)">
<rect x="4" y="4" width="8" height="37" fill="#e8e4e0"/>
<rect x="14" y="6" width="22" height="35" fill="#d8dcdc"/>
<rect x="36" y="6" width="12" height="35" fill="#b86a2a"/>
<path d="M14 41 Q16 30 26 30 Q36 30 38 41Z" fill="#f0f0f0"/>
<ellipse cx="26" cy="22" rx="7" ry="9" fill="#d8b4a0"/>
<path d="M19 20 Q19 12 26 12 Q33 12 33 20 Q30 15 26 15 Q22 15 19 20Z" fill="#3a2a20"/>
</svg></div>
<div class="a lab" style="left:119px;top:321px;width:76px"></div><svg class="a" style="left:122px;top:322px" width="7" height="9" viewBox="0 0 7 9"><rect x="2" y="0.5" width="3" height="5" rx="1.5" fill="#e02f3a"/><path d="M1 4 Q1 7 3.5 7 Q6 7 6 4 M3.5 7 L3.5 8.5" stroke="#e02f3a" stroke-width="0.8" fill="none"/><path d="M0.5 8.5 L6.5 0.5" stroke="#e02f3a" stroke-width="0.9"/></svg><div class="a t pn" style="left:133.6px;top:322px;transform:scaleX(0.966)">Vira Andriievska</div>
<div class="a" style="left:40px;top:339px;width:48px;height:49px;border-radius:3px;overflow:hidden;background:#e0e0e0">
<svg class="a" style="left:0;top:0" width="48" height="49" viewBox="0 0 48 49" filter="url(#bl4)">
<rect width="48" height="49" fill="#dcdcdc"/>
<rect x="0" y="10" width="9" height="39" fill="#3a3a3a"/><rect x="40" y="10" width="8" height="39" fill="#4a4a4a"/>
<path d="M8 40 Q6 12 24 8 Q42 10 42 38 L36 42 L12 42Z" fill="#4a2a22"/>
<ellipse cx="24" cy="24" rx="12" ry="14" fill="#e4ac94"/>
<path d="M12 18 Q16 8 26 9 Q36 10 37 20 Q30 13 22 14 Q15 15 12 18Z" fill="#5a3028"/>
<path d="M4 49 Q8 36 24 36 Q40 36 46 49Z" fill="#2a1a1a"/>
<path d="M30 38 Q42 38 48 49 L26 49Z" fill="#d82a2a"/>
<path d="M10 44 Q16 40 22 44" stroke="#c83a3a" stroke-width="1.5" fill="none"/>
</svg></div>
<div class="a lab" style="left:13px;top:381px;width:60px"></div><svg class="a" style="left:16px;top:382px" width="7" height="9" viewBox="0 0 7 9"><rect x="2" y="0.5" width="3" height="5" rx="1.5" fill="#e02f3a"/><path d="M1 4 Q1 7 3.5 7 Q6 7 6 4 M3.5 7 L3.5 8.5" stroke="#e02f3a" stroke-width="0.8" fill="none"/><path d="M0.5 8.5 L6.5 0.5" stroke="#e02f3a" stroke-width="0.9"/></svg><div class="a t pn" style="left:27.3px;top:382px;transform:scaleX(0.961)">Колгатіна</div>
<div class="a" style="left:146px;top:339px;width:50px;height:49px;border-radius:3px;overflow:hidden;background:#d4d6d2">
<svg class="a" style="left:0;top:0" width="50" height="49" viewBox="0 0 50 49" filter="url(#bl3)">
<rect x="0" y="0" width="50" height="10" fill="#eef0f0"/>
<rect x="30" y="8" width="18" height="30" fill="#c4b898"/>
<rect x="34" y="10" width="6" height="12" fill="#6aa0b0"/>
<rect x="0" y="14" width="20" height="20" fill="#9aa4a8"/>
<path d="M10 49 Q12 34 24 34 Q36 34 38 49Z" fill="#8a2828"/>
<ellipse cx="24" cy="28" rx="8" ry="11" fill="#e8d8b0"/>
<ellipse cx="24" cy="28" rx="5" ry="7" fill="#d4b4a0"/>
</svg></div>
<div class="a lab" style="left:119px;top:381px;width:84px"></div><svg class="a" style="left:122px;top:382px" width="7" height="9" viewBox="0 0 7 9"><rect x="2" y="0.5" width="3" height="5" rx="1.5" fill="#e02f3a"/><path d="M1 4 Q1 7 3.5 7 Q6 7 6 4 M3.5 7 L3.5 8.5" stroke="#e02f3a" stroke-width="0.8" fill="none"/><path d="M0.5 8.5 L6.5 0.5" stroke="#e02f3a" stroke-width="0.9"/></svg><div class="a t pn" style="left:133.6px;top:382px;transform:scaleX(0.964)">Ольга Думчікова</div></div>
<div id="tb" class="a">
  <svg class="a" style="left:29px;top:7px" width="11" height="16" viewBox="0 0 11 16"><rect x="3" y="0.7" width="5" height="9" rx="2.5" stroke="#e8e8e8" stroke-width="1.2" fill="none"/><path d="M1 7 Q1 12 5.5 12 Q10 12 10 7 M5.5 12 L5.5 15 M2.5 15.2 L8.5 15.2" stroke="#e8e8e8" stroke-width="1.2" fill="none"/></svg>
  <svg class="a" style="left:53px;top:14px" width="7" height="5" viewBox="0 0 7 5"><path d="M1 4 L3.5 1.5 L6 4" stroke="#e8e8e8" stroke-width="1.2" fill="none"/></svg>
  <div class="a t bl" style="left:24px;top:27px">Audio</div>
  <svg class="a" style="left:88px;top:9px" width="17" height="12" viewBox="0 0 17 12"><rect x="0.7" y="1.5" width="10.5" height="9" rx="2" stroke="#e8e8e8" stroke-width="1.2" fill="none"/><path d="M11.5 5 L16 2.5 L16 9.5 L11.5 7" stroke="#e8e8e8" stroke-width="1.2" fill="none"/></svg>
  <svg class="a" style="left:118px;top:14px" width="7" height="5" viewBox="0 0 7 5"><path d="M1 4 L3.5 1.5 L6 4" stroke="#e8e8e8" stroke-width="1.2" fill="none"/></svg>
  <div class="a t bl" style="left:86px;top:27px">Video</div>
  <svg class="a" style="left:241px;top:8px" width="14" height="14" viewBox="0 0 14 14"><circle cx="4" cy="3" r="2.2" stroke="#e8e8e8" stroke-width="1.1" fill="none"/><path d="M0.8 9.5 Q0.8 6.5 4 6.5 Q5.5 6.5 6.3 7.3" stroke="#e8e8e8" stroke-width="1.1" fill="none"/><circle cx="9.5" cy="6.5" r="2.3" stroke="#e8e8e8" stroke-width="1.1" fill="none"/><path d="M5.5 13.3 L5.5 12 Q5.5 9.8 9.5 9.8 Q13.3 9.8 13.3 12 L13.3 13.3Z" stroke="#e8e8e8" stroke-width="1.1" fill="none"/><path d="M0.8 9.5 L0.8 13.3 L5.5 13.3" stroke="#e8e8e8" stroke-width="1.1" fill="none"/></svg>
  <div class="a t" style="left:259px;top:9px;font-size:8px;color:#ccc">10</div>
  <svg class="a" style="left:280px;top:14px" width="7" height="5" viewBox="0 0 7 5"><path d="M1 4 L3.5 1.5 L6 4" stroke="#e8e8e8" stroke-width="1.2" fill="none"/></svg>
  <div class="a t bl" style="left:227px;top:27px">Participants</div>
  <svg class="a" style="left:313px;top:7px" width="16" height="16" viewBox="0 0 16 16"><path d="M5 3.5 Q5 1 8 1 L12.5 1 Q15.2 1 15.2 3.5 L15.2 7.5 Q15.2 10 12.5 10" stroke="#e8e8e8" stroke-width="1.1" fill="none"/><path d="M1 7 Q1 4 4 4 L9 4 Q12 4 12 7 L12 10 Q12 13 9 13 L5 13 L3 15.3 L3 12.8 Q1 12 1 10Z" stroke="#e8e8e8" stroke-width="1.1" fill="none"/><circle cx="4.3" cy="8.5" r="0.7" fill="#e8e8e8"/><circle cx="6.5" cy="8.5" r="0.7" fill="#e8e8e8"/><circle cx="8.7" cy="8.5" r="0.7" fill="#e8e8e8"/></svg>
  <svg class="a" style="left:340px;top:14px" width="7" height="5" viewBox="0 0 7 5"><path d="M1 4 L3.5 1.5 L6 4" stroke="#e8e8e8" stroke-width="1.2" fill="none"/></svg>
  <div class="a t bl" style="left:313px;top:27px">Chat</div>
  <div class="a" style="left:376px;top:9px;width:17px;height:12px;background:#2bd67b;border-radius:2px"></div>
  <svg class="a" style="left:380px;top:10px" width="9" height="10" viewBox="0 0 9 10"><path d="M4.5 1 L8 4.5 L5.7 4.5 L5.7 9 L3.3 9 L3.3 4.5 L1 4.5Z" fill="#111"/></svg>
  <div class="a t bl" style="left:374px;top:27px">Share</div>
  <svg class="a" style="left:436px;top:9px" width="17" height="14" viewBox="0 0 17 14"><path d="M8.5 13 L2.2 6.8 Q0.5 5 1.5 3 Q3 0.5 5.5 1 Q7.5 1.5 8.5 3.5 Q9.5 1.5 11.5 1 Q14 0.5 15.5 3 Q16.5 5 14.8 6.8Z" stroke="#e8e8e8" stroke-width="1.1" fill="none"/></svg>
  <svg class="a" style="left:460px;top:14px" width="7" height="5" viewBox="0 0 7 5"><path d="M1 4 L3.5 1.5 L6 4" stroke="#e8e8e8" stroke-width="1.2" fill="none"/></svg>
  <div class="a t bl" style="left:434px;top:27px">React</div>
  <svg class="a" style="left:493px;top:10px" width="18" height="16" viewBox="0 0 18 16"><path d="M7 3 Q8 9 13 10 Q8 11 7 16 Q6 11 1 10 Q6 9 7 3Z" fill="#cfe6f0"/><circle cx="14" cy="3.5" r="2" fill="#eef6fa"/></svg>
  <div class="a t bl" style="left:476px;top:27px">AI Companion</div>
  <svg class="a" style="left:552px;top:8px" width="14" height="14" viewBox="0 0 14 14"><path d="M1 5 L1 3 Q1 1 3 1 L5 1 M9 13 L11 13 Q13 13 13 11 L13 9 M1 9 L1 11" stroke="#e8e8e8" stroke-width="1.2" fill="none"/><circle cx="10.3" cy="3.7" r="2.6" stroke="#e8e8e8" stroke-width="1.2" fill="none"/><circle cx="3.7" cy="10.3" r="2.6" stroke="#e8e8e8" stroke-width="1.2" fill="none"/></svg>
  <div class="a t bl" style="left:551px;top:27px">Apps</div>
  <svg class="a" style="left:605px;top:8px" width="15" height="15" viewBox="0 0 15 15"><circle cx="7.5" cy="7.5" r="6.6" stroke="#e8e8e8" stroke-width="1.2" fill="none"/><circle cx="7.5" cy="7.5" r="3.3" fill="#e8e8e8"/></svg>
  <div class="a t bl" style="left:601px;top:27px">Record</div>
  <svg class="a" style="left:664px;top:9px" width="18" height="14" viewBox="0 0 18 14"><path d="M10 10.5 L3 10.5 Q1 10.5 1 8.5 L1 2.5 Q1 0.8 3 0.8 L14 0.8 Q16 0.8 16 2.5 L16 6" stroke="#e8e8e8" stroke-width="1.2" fill="none"/><rect x="9.5" y="10" width="8" height="2.8" rx="0.8" fill="#e8e8e8"/></svg>
  <div class="a t bl" style="left:650px;top:27px">Whiteboards</div>
  <svg class="a" style="left:730px;top:7px" width="16" height="16" viewBox="0 0 16 16"><path d="M3 13 L3 2.5 Q3 0.8 4.7 0.8 L11 0.8 Q12.7 0.8 12.7 2.5 L12.7 11" stroke="#e8e8e8" stroke-width="1.2" fill="none"/><path d="M5.5 4 L10 4 M5.5 6.3 L10 6.3 M5.5 8.6 L8 8.6" stroke="#e8e8e8" stroke-width="1.1"/><rect x="6" y="12" width="9" height="3" rx="0.8" fill="#e8e8e8"/></svg>
  <div class="a t bl" style="left:728px;top:27px">Notes</div>
  <svg class="a" style="left:794px;top:9px" width="16" height="12" viewBox="0 0 16 12"><rect x="0.7" y="0.7" width="14.6" height="10.6" rx="2" stroke="#e8e8e8" stroke-width="1.2" fill="none"/><text x="8" y="8.3" font-family="Liberation Sans" font-weight="bold" font-size="6.5" fill="#e8e8e8" text-anchor="middle">CC</text></svg>
  <svg class="a" style="left:822px;top:13px" width="7" height="5" viewBox="0 0 7 5"><path d="M1 4 L3.5 1.5 L6 4" stroke="#e8e8e8" stroke-width="1.2" fill="none"/></svg>
  <div class="a t bl" style="left:776px;top:27px">Show captions</div>
  <svg class="a" style="left:852px;top:8px" width="17" height="17" viewBox="0 0 17 17"><circle cx="8.5" cy="8.5" r="7.6" stroke="#e8e8e8" stroke-width="1.2" fill="none"/><circle cx="5.2" cy="8.5" r="1" fill="#e8e8e8"/><circle cx="8.5" cy="8.5" r="1" fill="#e8e8e8"/><circle cx="11.8" cy="8.5" r="1" fill="#e8e8e8"/></svg>
  <div class="a t bl" style="left:851px;top:27px">More</div>
  <svg class="a" style="left:983px;top:7px" width="16" height="17" viewBox="0 0 16 17"><rect x="9" y="1" width="5.5" height="14" rx="0.5" stroke="#c4284a" stroke-width="1.4" fill="none"/><circle cx="6" cy="3.5" r="2" fill="#eee"/><path d="M3.5 6 L8 6 L9 10 L7 10 L8 15 L6 15 L5 11 L3 15 L1.2 15 L3.3 10 Z" fill="#eee"/></svg>
  <div class="a t bl" style="left:980px;top:27px">Leave</div>
</div>
<div id="task" class="a">
  <svg class="a" style="left:10px;top:8px" width="12" height="12" viewBox="0 0 12 12"><rect x="0" y="0.5" width="5.5" height="5" fill="#fff"/><rect x="6.3" y="0" width="5.7" height="5.5" fill="#fff"/><rect x="0" y="6.3" width="5.5" height="5" fill="#fff"/><rect x="6.3" y="6.3" width="5.7" height="5.7" fill="#fff"/></svg>
  <svg class="a" style="left:41px;top:5px" width="16" height="16" viewBox="0 0 16 16"><circle cx="9.5" cy="6.5" r="4.8" stroke="#fff" stroke-width="1.6" fill="none"/><path d="M6 10 L1.5 14.5" stroke="#fff" stroke-width="1.8"/></svg>
  <svg class="a" style="left:74px;top:6px" width="17" height="13" viewBox="0 0 17 13"><path d="M0.5 1.5 Q0.5 0.5 1.5 0.5 L6 0.5 L7.5 2 L15.5 2 Q16.5 2 16.5 3 L16.5 12.5 L0.5 12.5Z" fill="#f0c24a"/><rect x="0.5" y="4" width="16" height="8.5" fill="#f6d36a"/><rect x="4" y="7" width="9" height="5.5" fill="#3f8fd0"/><rect x="5" y="8" width="7" height="4.5" fill="#9ad0f0"/></svg>
  <svg class="a" style="left:106px;top:5px" width="19" height="18" viewBox="0 0 19 18"><path d="M9 1.2 A7.6 7.6 0 1 1 5 15.4 L1.2 16.5 L2.4 12.8 A7.6 7.6 0 0 1 9 1.2Z" stroke="#3bd16f" stroke-width="1.5" fill="none"/><path d="M6 5.5 Q6 9.5 11 11.8 L12.5 10.5 L11 9.5 L10 10 Q8 9 7.5 7 L8 6 L7 4.5Z" fill="#3bd16f"/><circle cx="15" cy="14" r="3.8" fill="#1c1c1c" stroke="#888" stroke-width="0.6"/><text x="15" y="16.3" font-family="Liberation Sans" font-size="6" fill="#fff" text-anchor="middle" font-weight="bold">1</text></svg>
  <div class="a" style="left:132px;top:0;width:32px;height:27px;background:#3b3b3b"></div>
  <svg class="a" style="left:139px;top:4px" width="18" height="18" viewBox="0 0 18 18"><circle cx="9" cy="9" r="8" fill="#db3b30"/><path d="M9 9 L2.1 5 A8 8 0 0 0 9 17Z" fill="#2f9a4a"/><path d="M9 9 L9 17 A8 8 0 0 0 15.9 5Z" fill="#f5c02c"/><path d="M9 9 L15.9 5 A8 8 0 0 0 2.1 5Z" fill="#db3b30"/><circle cx="9" cy="9" r="3.8" fill="#fff"/><circle cx="9" cy="9" r="3" fill="#3a76e0"/></svg>
  <div class="a" style="left:149px;top:12px;width:9px;height:9px;border-radius:50%;background:#e8457a"></div>
  <svg class="a" style="left:172px;top:4px" width="18" height="18" viewBox="0 0 18 18"><circle cx="9" cy="9" r="8" fill="#db3b30"/><path d="M9 9 L2.1 5 A8 8 0 0 0 9 17Z" fill="#2f9a4a"/><path d="M9 9 L9 17 A8 8 0 0 0 15.9 5Z" fill="#f5c02c"/><path d="M9 9 L15.9 5 A8 8 0 0 0 2.1 5Z" fill="#db3b30"/><circle cx="9" cy="9" r="3.8" fill="#fff"/><circle cx="9" cy="9" r="3" fill="#3a76e0"/></svg>
  <div class="a" style="left:184px;top:13px;width:6px;height:8px;border-radius:3px 3px 0 0;background:#2a2a2a"></div>
  <svg class="a" style="left:205px;top:6px" width="18" height="16" viewBox="0 0 18 16"><rect x="5" y="0.5" width="12.5" height="15" rx="1.2" fill="#4a8ce8"/><rect x="5" y="5" width="12.5" height="5" fill="#2b6dd0"/><rect x="5" y="10" width="12.5" height="5.5" fill="#1a52a8"/><rect x="0.5" y="3.5" width="10" height="9" rx="1" fill="#1e5bbf"/><text x="5.5" y="10.8" font-family="Liberation Sans" font-size="7" font-weight="bold" fill="#fff" text-anchor="middle">W</text></svg>
  <svg class="a" style="left:239px;top:4px" width="20" height="19" viewBox="0 0 20 19"><circle cx="9" cy="9" r="8" fill="#2aa3e0"/><path d="M4.5 8.8 L13 5.2 L11.8 12.5 L9 10.4 L7.5 11.8 L7.6 9.8 L11.5 6.5 L7 9.3Z" fill="#fff"/><rect x="10" y="10.5" width="9" height="7.5" rx="2" fill="#e23b3b"/></svg>
  <svg class="a" style="left:272px;top:4px" width="20" height="19" viewBox="0 0 20 19"><path d="M9 1 Q16 1 16 8 Q16 14 9 14 L6 16.5 L6 13.5 Q2 12 2 8 Q2 1 9 1Z" fill="#8a5cf0"/><path d="M9 2.8 Q14.2 2.8 14.2 8 Q14.2 12.3 9 12.3 L7.5 13.8 L7.5 12 Q3.8 11 3.8 8 Q3.8 2.8 9 2.8Z" fill="#f4eefe"/><rect x="10.5" y="9.5" width="9" height="9" rx="3" fill="#e23b3b"/><text x="15" y="16.5" font-family="Liberation Sans" font-size="6" fill="#fff" text-anchor="middle">64</text></svg>
  <svg class="a" style="left:305px;top:5px" width="18" height="18" viewBox="0 0 18 18"><circle cx="9" cy="9" r="8.3" fill="#2d63e8"/><rect x="4" y="8.3" width="10" height="1.4" fill="#fff" opacity="0.8"/></svg>
  <svg class="a" style="left:338px;top:5px" width="18" height="17" viewBox="0 0 18 17"><rect x="5" y="0.5" width="12.5" height="16" rx="1.2" fill="#21a366"/><rect x="5" y="6" width="12.5" height="5" fill="#107c41"/><rect x="0.5" y="3.5" width="10" height="9.5" rx="1" fill="#107c41"/><text x="5.5" y="11" font-family="Liberation Sans" font-size="7.5" font-weight="bold" fill="#fff" text-anchor="middle">X</text></svg>
  <svg class="a" style="left:371px;top:5px" width="19" height="17" viewBox="0 0 19 17"><ellipse cx="8" cy="10" rx="7.5" ry="5.5" fill="#e8e2d8"/><circle cx="5" cy="9" r="1.2" fill="#3a7ad0"/><circle cx="8" cy="7.5" r="1.2" fill="#d04040"/><circle cx="4.5" cy="12" r="1.2" fill="#40a040"/><path d="M10 10 L17 1.5 L18 2.5 L11.5 11Z" fill="#c8a060"/></svg>
  <div class="a" style="left:69px;top:24px;width:27px;height:3px;background:#8fb6e6;border-radius:1px"></div><div class="a" style="left:102px;top:24px;width:27px;height:3px;background:#8fb6e6;border-radius:1px"></div><div class="a" style="left:133px;top:24px;width:30px;height:3px;background:#8fb6e6;border-radius:1px"></div><div class="a" style="left:168px;top:24px;width:27px;height:3px;background:#8fb6e6;border-radius:1px"></div><div class="a" style="left:201px;top:24px;width:27px;height:3px;background:#8fb6e6;border-radius:1px"></div><div class="a" style="left:234px;top:24px;width:27px;height:3px;background:#8fb6e6;border-radius:1px"></div><div class="a" style="left:267px;top:24px;width:27px;height:3px;background:#8fb6e6;border-radius:1px"></div><div class="a" style="left:300px;top:24px;width:27px;height:3px;background:#8fb6e6;border-radius:1px"></div><div class="a" style="left:333px;top:24px;width:27px;height:3px;background:#8fb6e6;border-radius:1px"></div><div class="a" style="left:366px;top:24px;width:27px;height:3px;background:#8fb6e6;border-radius:1px"></div>
  <svg class="a" style="left:862px;top:10px" width="9" height="6" viewBox="0 0 9 6"><path d="M1 5 L4.5 1.5 L8 5" stroke="#ddd" stroke-width="1.1" fill="none"/></svg>
  <svg class="a" style="left:874px;top:8px" width="12" height="9" viewBox="0 0 12 9"><rect x="3" y="2" width="8" height="6" fill="#ddd"/><rect x="0.5" y="0.5" width="2" height="3" fill="#ddd"/></svg>
  <svg class="a" style="left:892px;top:6px" width="9" height="14" viewBox="0 0 9 14"><rect x="2" y="1" width="5" height="8" fill="#ddd"/><rect x="0.5" y="9" width="8" height="1.5" fill="#ddd"/><rect x="4" y="10" width="1.2" height="3.5" fill="#ddd"/></svg>
  <svg class="a" style="left:906px;top:7px" width="12" height="11" viewBox="0 0 12 11"><path d="M1 3.5 L3 3.5 L5.5 1 L5.5 10 L3 7.5 L1 7.5Z" fill="none" stroke="#ddd" stroke-width="1"/><path d="M7.5 3.5 Q8.8 5.5 7.5 7.5 M9.3 2 Q11.5 5.5 9.3 9" stroke="#ddd" stroke-width="1" fill="none"/></svg>
  <div class="a t" style="left:924px;top:8px;font-size:8px;color:#e6e6e6">УКР</div>
  <div class="a t" style="left:957px;top:1px;font-size:8px;color:#e6e6e6">13:01</div>
  <div class="a t" style="left:948px;top:12px;font-size:8px;color:#e6e6e6;letter-spacing:-0.3px">10.03.2026</div>
  <svg class="a" style="left:996px;top:4px" width="18" height="19" viewBox="0 0 18 19"><path d="M1 1 L12.5 1 L12.5 9.5 L5 9.5 L1 12.5Z" fill="#e6e6e6"/><path d="M3.5 3.5 L10 3.5 M3.5 5.5 L10 5.5" stroke="#1f1f1f" stroke-width="0.9"/><circle cx="12" cy="13" r="4.8" fill="#1f1f1f" stroke="#9a9a9a" stroke-width="0.7"/><text x="12" y="15.7" font-family="Liberation Sans" font-size="7.5" fill="#fff" text-anchor="middle">3</text></svg>
</div>
</body></html>
